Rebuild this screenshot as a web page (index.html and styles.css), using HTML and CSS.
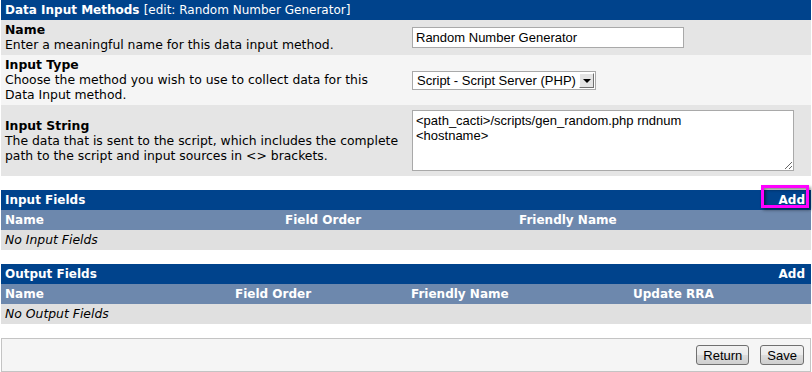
FILE: index.html
```html
<!DOCTYPE html>
<html lang="en">
  <head>
    <meta charset="UTF-8" />
    <title>Data Input Methods</title>
    <link rel="stylesheet" href="styles.css">
  </head>
  <body>
    <table class="form-table">
      <tr class="table-header">
        <td colspan="2">Data Input Methods <span class="header-note">[edit: Random Number Generator]</span></td>
      </tr>
      <tr class="row-dark">
        <td class="field-desc">
          <strong>Name</strong><br />
          Enter a meaningful name for this data input method.
        </td>
        <td class="field-input">
          <input type="text" class="text-input" value="Random Number Generator" />
        </td>
      </tr>
      <tr class="row-light">
        <td class="field-desc">
          <strong>Input Type</strong><br />
          Choose the method you wish to use to collect data for this Data Input method.
        </td>
        <td class="field-input">
          <div class="select-box">
            <span class="select-value">Script - Script Server (PHP)</span>
            <span class="select-arrow"></span>
          </div>
        </td>
      </tr>
      <tr class="row-dark">
        <td class="field-desc">
          <strong>Input String</strong><br />
          The data that is sent to the script, which includes the complete path to the script and input sources in &lt;&gt; brackets.
        </td>
        <td class="field-input">
          <textarea class="text-area">&lt;path_cacti&gt;/scripts/gen_random.php rndnum &lt;hostname&gt;</textarea>
        </td>
      </tr>
    </table>

    <table class="list-table">
      <colgroup>
        <col class="col-input-name" />
        <col class="col-input-order" />
        <col />
      </colgroup>
      <tr class="table-header">
        <td colspan="2">Input Fields</td>
        <td class="header-action"><span class="add-link highlighted">Add</span></td>
      </tr>
      <tr class="sub-header">
        <td>Name</td>
        <td>Field Order</td>
        <td>Friendly Name</td>
      </tr>
      <tr class="empty-row">
        <td colspan="3"><em>No Input Fields</em></td>
      </tr>
    </table>

    <table class="list-table">
      <colgroup>
        <col class="col-output-name" />
        <col class="col-output-order" />
        <col class="col-output-friendly" />
        <col />
      </colgroup>
      <tr class="table-header">
        <td colspan="3">Output Fields</td>
        <td class="header-action"><span class="add-link">Add</span></td>
      </tr>
      <tr class="sub-header">
        <td>Name</td>
        <td>Field Order</td>
        <td>Friendly Name</td>
        <td>Update RRA</td>
      </tr>
      <tr class="empty-row">
        <td colspan="4"><em>No Output Fields</em></td>
      </tr>
    </table>

    <div class="save-bar">
      <button class="btn">Return</button>
      <button class="btn">Save</button>
    </div>
  </body>
</html>
```

FILE: styles.css
```css
body {
  margin: 0;
  padding: 0 1px;
  background-color: #fff;
  font-family: "DejaVu Sans", Verdana, sans-serif;
  font-size: 12px;
  color: #000;
}

table {
  width: 100%;
  border-collapse: collapse;
  font-size: 12px;
}

td {
  padding: 0 4px;
}

.table-header td {
  background-color: #00438c;
  color: #fff;
  font-weight: bold;
  height: 20px;
  line-height: 20px;
  padding-top: 0;
  padding-bottom: 0;
}

.header-note {
  font-weight: normal;
}

.header-action {
  text-align: right;
  padding-right: 6px;
}

/* form rows */
.form-table {
  margin-bottom: 14px;
}

.row-dark td {
  background-color: #e5e5e5;
}

.row-light td {
  background-color: #f5f5f5;
}

.field-desc {
  width: 396px;
  font-size: 12.4px;
  line-height: 15px;
  padding: 2px 4px 3px;
  vertical-align: middle;
}

.field-input {
  vertical-align: middle;
  padding: 0 4px 0 7px;
}

.text-input {
  width: 272px;
  height: 21px;
  box-sizing: border-box;
  border: 1px solid #a9a9a9;
  padding: 0 3px;
  font-family: "Liberation Sans", Arial, sans-serif;
  font-size: 13px;
  color: #000;
  display: block;
}

.select-box {
  position: relative;
  width: 184px;
  height: 19px;
  box-sizing: border-box;
  border: 1px solid #a9a9a9;
  background: #fff;
  font-family: "Liberation Sans", Arial, sans-serif;
  font-size: 13px;
  line-height: 17px;
}

.select-value {
  padding-left: 4px;
}

.select-arrow {
  position: absolute;
  right: 1px;
  top: 1px;
  width: 15px;
  height: 15px;
  box-sizing: border-box;
  background: #e4e4e4;
  border: 1px solid;
  border-color: #fff #707070 #707070 #fff;
}

.select-arrow::after {
  content: "";
  position: absolute;
  left: 3px;
  top: 5px;
  border-left: 4px solid transparent;
  border-right: 4px solid transparent;
  border-top: 4px solid #000;
}

.text-area {
  display: block;
  width: 382px;
  height: 61px;
  box-sizing: border-box;
  margin: 5px 0;
  border: 1px solid #a9a9a9;
  padding: 2px 60px 2px 3px;
  font-family: "Liberation Sans", Arial, sans-serif;
  font-size: 13px;
  line-height: 15px;
  resize: vertical;
}

/* list tables */
.list-table {
  margin-bottom: 14px;
}

.sub-header td {
  background-color: #6d88ad;
  color: #fff;
  font-weight: bold;
  height: 20px;
  line-height: 20px;
}

.empty-row td {
  background-color: #e0e0e0;
  height: 20px;
  line-height: 20px;
  font-size: 12.4px;
}

.col-input-name {
  width: 280px;
}

.col-input-order {
  width: 234px;
}

.col-output-name {
  width: 230px;
}

.col-output-order {
  width: 176px;
}

.col-output-friendly {
  width: 222px;
}

.add-link {
  display: inline-block;
}

.add-link.highlighted {
  position: relative;
}

.add-link.highlighted::before {
  content: "";
  position: absolute;
  left: -18px;
  right: -4px;
  top: -5px;
  bottom: 2px;
  border: 3px solid #ff00ff;
  box-shadow: 2px 2px 3px rgba(0, 0, 0, 0.45), inset 2px 2px 3px rgba(0, 0, 0, 0.45);
}

/* save bar */
.save-bar {
  display: flex;
  justify-content: flex-end;
  gap: 11px;
  height: 34px;
  box-sizing: border-box;
  align-items: center;
  padding: 0 6px;
  border: 1px solid #c4c4c4;
  background-color: #f5f5f5;
}

.btn {
  font-family: "Liberation Sans", Arial, sans-serif;
  font-size: 13px;
  color: #000;
  height: 20px;
  padding: 0 6px;
  border: 1px solid #707070;
  border-radius: 3px;
  background: linear-gradient(#f2f2f2, #ebebeb 50%, #dddddd 51%, #cfcfcf);
}
```
